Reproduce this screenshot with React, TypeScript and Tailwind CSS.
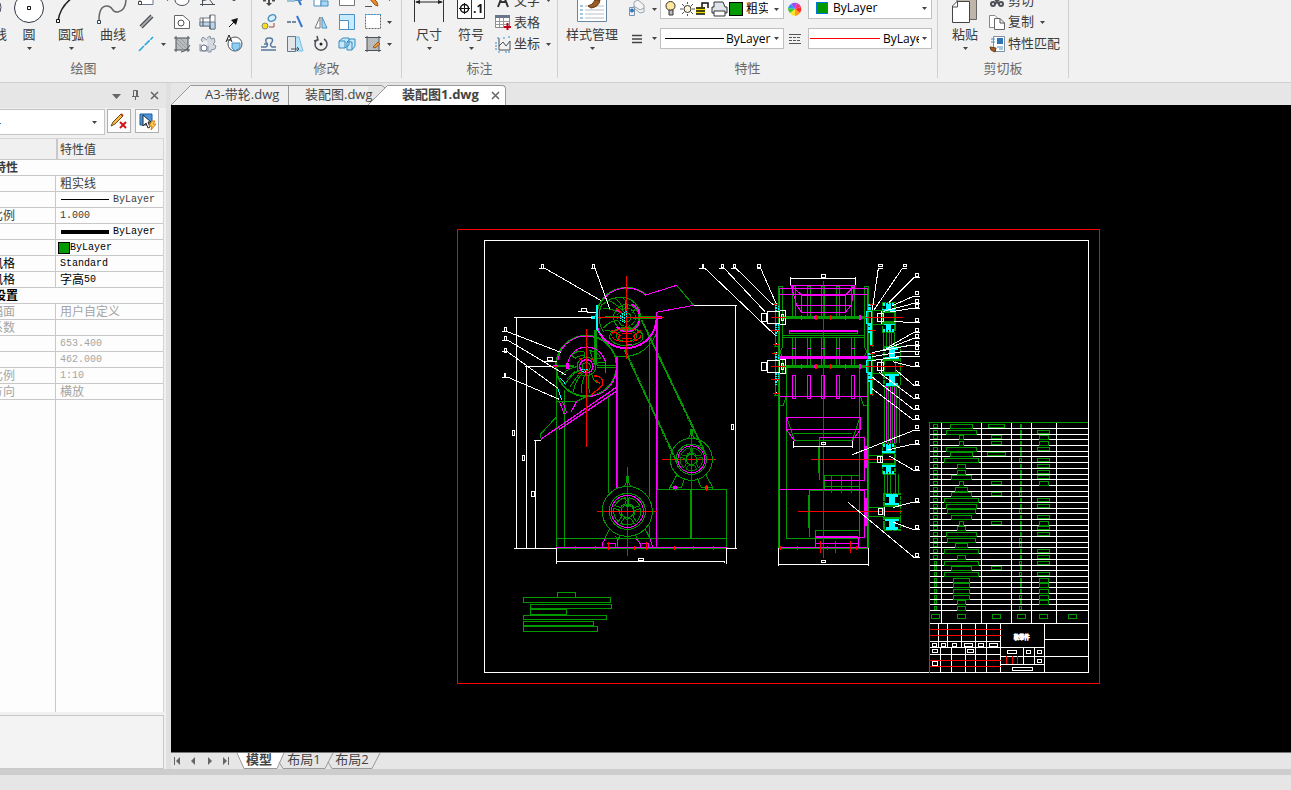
import type { ReactNode } from "react"

const GREEN = "#009900"
const MAGENTA = "#ff00ff"
const RED = "#ff0000"
const CYAN = "#00ffff"

const ink = { fill: "none", stroke: "#4b4f57", strokeWidth: 1 }
const blue = { fill: "none", stroke: "#4a90c4", strokeWidth: 1 }

function Arrow() {
  return (
    <svg width="5" height="3" viewBox="0 0 5 3" className="shrink-0">
      <path d="M0 0H5L2.500 3Z" fill="#444" />
    </svg>
  )
}

function Group({ label, className, children }: { label: string; className: string; children: ReactNode }) {
  return (
    <section className={"flex h-[78px] shrink-0 flex-col border-r border-[#d0d0d0] " + className}>
      <div className="flex h-[60px] overflow-hidden">{children}</div>
      <h2 className="text-center text-[13px] leading-[17px] text-[#6a6a6a]">{label}</h2>
    </section>
  )
}

function BigButton({ label, className, children }: { label: string; className: string; children: ReactNode }) {
  return (
    <button className={"flex shrink-0 flex-col items-center " + className}>
      {children}
      <span className="h-[22px] text-[13px] leading-[18px] whitespace-nowrap">{label}</span>
      <Arrow />
    </button>
  )
}

// small tool button; the first row is cut by the top edge of the window
function Tool({ name, top, children }: { name: string; top?: boolean; children?: ReactNode }) {
  return (
    <button aria-label={name}>
      <svg width="26" height={top ? 11 : 22} viewBox={top ? "0 11 26 11" : "0 0 26 22"}>
        {children}
      </svg>
    </button>
  )
}

function DrawTools() {
  return (
    <div className="grid grid-cols-[26px_8px_26px_26px_26px] grid-rows-[11px_22px_22px] items-center">
      <Tool name="矩形" top><path d="M5 8V15.500H18V8" fill="#fff" stroke="#68788a" /><path d="M3.500 12.500h3v3h-3z" fill="#fff" stroke="#444" /></Tool>
      <span className="mb-3 ml-1"><Arrow /></span>
      <Tool name="椭圆" top><ellipse cx="13" cy="11" rx="7" ry="5.500" {...ink} fill="#fff" /></Tool>
      <Tool name="坐标系" top><path d="M7.500 5V17M5 15.500H20M7 12L14 10 18 15" {...ink} /></Tool>
      <Tool name="箭头线" top><path d="M11 11h4l-2 1z" fill="#222" /></Tool>
      <Tool name="平行线"><path d="M5 15L16 4M7 17L18 6" {...ink} strokeWidth="1.500" /><path d="M6 16L17 5" stroke="#aaa" strokeWidth="1" /></Tool>
      <span />
      <Tool name="轮廓"><path d="M5.500 4.500H14L20.500 10V17.500H5.500Z" fill="#fff" stroke="#666" /><circle cx="12" cy="12" r="3" {...ink} /></Tool>
      <Tool name="轴孔"><path d="M5 7H15V4H20V18H15V15H5Z" fill="#fff" stroke="#777b88" /><path d="M5 11H20V18H15V15H5Z" fill="#b8d7ee" stroke="#777b88" /><path d="M8 7V15M15 4V18" {...ink} /></Tool>
      <Tool name="箭头"><path d="M8 16L13 11" stroke="#111" /><path d="M10 9L17 7L15 14Z" fill="#111" /></Tool>
      <Tool name="直线"><path d="M4 18L18 4" stroke="#23a6df" strokeWidth="1.500" strokeDasharray="7 1" /></Tool>
      <Arrow />
      <Tool name="剖面线"><path d="M7 5H19V17H7Z" fill="#b9bcbf" /><path d="M7 3V19M19 3V19M5 5H21M5 17H21" {...ink} /><path d="M8 6L18 16M12 6L18 12M8 10L14 16" stroke="#999" strokeWidth="1" /><path d="M12 19Q18 18 21 12" {...ink} /></Tool>
      <Tool name="齿轮"><path d="M12 5l3-2 1 3 3-1 1 4-2 2 3 2-1 3-4 1 0 2-3 0M12 7L8 4 6 7 8 9M5 11V18H13V13" fill="#d4d8df" stroke="#8790a2" /><circle cx="9" cy="15" r="3" fill="#fff" stroke="#68728a" /></Tool>
      <Tool name="局部放大"><circle cx="14" cy="11" r="7" fill="#fff" stroke="#4b4f57" /><path d="M11 10H19V15L14 18L11 15Z" fill="#8fd0ef" stroke="#4a90c4" /><path d="M5 9L8 2L11 9M6 7H10" fill="none" stroke="#222" /></Tool>
    </div>
  )
}

function ModifyTools() {
  return (
    <div className="ml-1 grid grid-cols-[26px_26px_26px_26px_26px_8px] grid-rows-[11px_22px_22px] items-center">
      <Tool name="移动" top><path d="M13 11V16M7 11.500H10M16 11.500H19" {...ink} strokeWidth="2" /><path d="M10 14H16L13 17Z" fill="#444" /></Tool>
      <Tool name="裁剪" top><path d="M5 12H13" {...blue} /><path d="M15 8L19 16" stroke="#2f73c9" strokeWidth="2" /><path d="M13 11.500H20" {...blue} /></Tool>
      <Tool name="阵列" top><path d="M6 9H13V17H6Z" fill="#fff" stroke="#4a90c4" /><path d="M13 12H20V17H13Z" fill="#a8daf5" stroke="#4a90c4" /></Tool>
      <Tool name="块" top><path d="M5.500 8V16.500H20.500V8" fill="#fff" stroke="#777" /></Tool>
      <Tool name="编辑" top><path d="M8 8L15 16L18 17L17 13L12 8Z" fill="#e78b2d" stroke="#965818" /><path d="M5 17.500H12" stroke="#555" /></Tool>
      <span className="mb-3 ml-px"><Arrow /></span>
      <Tool name="复制"><ellipse cx="16" cy="7" rx="4" ry="3" transform="rotate(-30 16 7)" fill="#d7f0fc" stroke="#4a90c4" strokeWidth="1.500" /><circle cx="9" cy="15" r="3" fill="#f5dd18" stroke="#888" /><path d="M13 16H18V12" fill="none" stroke="#a84432" /></Tool>
      <Tool name="延伸"><path d="M5 11H15" stroke="#4a6887" strokeWidth="1.500" strokeDasharray="4 1" /><path d="M15 5L20 16" stroke="#3478cb" strokeWidth="2" /></Tool>
      <Tool name="镜像"><path d="M12 6V17H7Z" fill="#fff" stroke="#777" /><path d="M14 6V17H19Z" fill="#a8daf5" stroke="#4a90c4" /></Tool>
      <Tool name="缩放"><path d="M5.500 3.500H20.500V18.500H5.500Z" fill="#c7eaff" stroke="#4a90c4" /><path d="M5.500 9.500H14.500V18.500H5.500Z" fill="#fff" stroke="#4a90c4" /></Tool>
      <Tool name="选择"><path d="M5.500 3.500H20.500V17.500H5.500Z" fill="#fff" stroke="#666" strokeDasharray="2 1" /><path d="M5 3.500H21" stroke="#3b9bd8" strokeDasharray="2 1" /></Tool>
      <span className="ml-px"><Arrow /></span>
      <Tool name="偏移"><path d="M5 17H20M5 14H10Q13 12 10 9Q9 5 13 5Q18 5 16 9Q13 12 16 14H20M8 11H12" fill="none" stroke="#55789c" strokeWidth="1.500" /></Tool>
      <Tool name="拉伸"><path d="M13 4H17L21 18H13Z" fill="#b7e3f9" stroke="#7bbde0" /><path d="M5.500 3.500H13.500V18.500H5.500Z" fill="#e2e6ea" stroke="#68788a" /><path d="M9 16H17M15 14l2 2-2 2" {...ink} /></Tool>
      <Tool name="旋转"><path d="M10 6A6 6 0 1 0 16 6M9 3L10 7L6 8" {...ink} strokeWidth="1.500" /><circle cx="13" cy="11" r="1.500" fill="#222" /></Tool>
      <Tool name="分解"><path d="M5 8H11V15H5ZM5 8L9 5H15V12L11 15M13 9H18V17H13ZM13 9L16 6H21V13L18 17" fill="#c5e8fa" stroke="#368bc1" /></Tool>
      <Tool name="填充编辑"><path d="M7 5H19V17H7Z" fill="#b9bcbf" /><path d="M7 3V19M19 3V19M5 4.500H21M5 17.500H21" {...ink} /><path d="M13 14L18 9L20 11L15 15Z" fill="#e79b3a" stroke="#985b1b" /></Tool>
      <span className="ml-px"><Arrow /></span>
    </div>
  )
}

function Ribbon() {
  return (
    <header className="flex h-[83px] shrink-0 overflow-hidden border-b border-[#d0d0d0] bg-[#f1f1f1] text-[#3c3c3c]">
      <Group label="绘图" className="w-[252px] [&>h2]:pr-[84px]">
        <button className="flex w-2 shrink-0 flex-col items-end overflow-hidden">
          <svg width="8" height="25" viewBox="0 0 8 25"><path d="M0 3Q2 7 0 12" {...ink} strokeWidth="1" /></svg>
          <span className="flex w-[7px] justify-end pr-px text-[13px] leading-[18px] whitespace-nowrap">直线</span>
        </button>
        <BigButton label="圆" className="w-[42px]">
          <svg width="42" height="25" viewBox="0 0 42 25"><circle cx="21" cy="8" r="14.500" fill="#fff" stroke="#2b3442" /><path d="M19.500 6.500h3v3h-3z" fill="#fff" stroke="#111" /></svg>
        </BigButton>
        <BigButton label="圆弧" className="w-[42px]">
          <svg width="42" height="25" viewBox="0 0 42 25"><path d="M8 21Q10 7 22 -2" fill="none" stroke="#222" strokeWidth="1.500" /><path d="M6.500 19.500h3v3h-3z" fill="#fff" stroke="#111" /></svg>
        </BigButton>
        <BigButton label="曲线" className="w-[42px]">
          <svg width="42" height="25" viewBox="0 0 42 25"><path d="M7 20Q7 6 15 6C22 6 19 13 26 12Q34 10 34 -1" fill="none" stroke="#666" strokeWidth="1.500" /><path d="M5.500 20.500h3v3h-3z" fill="#fff" stroke="#345" /></svg>
        </BigButton>
        <div className="pl-px"><DrawTools /></div>
      </Group>
      <Group label="修改" className="w-[150px]"><ModifyTools /></Group>
      <Group label="标注" className="w-[156px]">
        <BigButton label="尺寸" className="ml-1.5 w-[42px]">
          <svg width="42" height="25" viewBox="0 0 42 25"><path d="M6.500 0V22M35.500 0V22" stroke="#333" /><path d="M8 2H34" stroke="#222" /><path d="M7 2L12 0V4ZM35 2L30 0V4Z" fill="#222" /></svg>
        </BigButton>
        <BigButton label="符号" className="w-[42px]">
          <svg width="42" height="25" viewBox="0 0 42 25"><path d="M7.500 -2V18.500H34.500V-2M21.500 -2V18" fill="#fff" stroke="#333" /><circle cx="14.500" cy="8.500" r="4" fill="none" stroke="#111" strokeWidth="1.500" /><path d="M9 8.500H20M14.500 3V14" stroke="#111" /><text x="23" y="13" fontSize="12" fontWeight="700" fill="#111">.1</text></svg>
        </BigButton>
        <div className="grid grid-cols-[22px_auto] grid-rows-[11px_22px_22px] items-center text-[13px]">
          <svg width="22" height="11" viewBox="0 0 22 11"><path d="M6 7L11 -6L16 7M8 2H14" fill="none" stroke="#333" strokeWidth="2" /></svg>
          <button className="flex h-[11px] items-end gap-1.5 overflow-hidden leading-[22px]"><span>文字</span><span className="mb-[9px] flex"><Arrow /></span></button>
          <svg width="22" height="22" viewBox="0 0 22 22"><path d="M3.500 4.500H17.500V16.500H3.500Z" fill="#fff" stroke="#888" /><path d="M3 4H18V7H3Z" fill="#68758a" /><path d="M3 10.500H17M3 13.500H17M7.500 7V16M11.500 7V16" stroke="#999" /><path d="M12 16H19M15.500 12V19" stroke="#c00018" strokeWidth="2" /></svg>
          <button className="text-left leading-5">表格</button>
          <svg width="22" height="22" viewBox="0 0 22 22"><path d="M7 5V17H18M7 13L11 9L14 13L18 8V17" {...ink} /><path d="M5 5H8M4 9V17M11 5H14M17 3V6M6 19H9M13 19H18" stroke="#2d91d0" strokeDasharray="2 1" /></svg>
          <button className="flex items-center gap-1.5">坐标<Arrow /></button>
        </div>
      </Group>
      <Group label="特性" className="w-[380px]">
        <BigButton label="样式管理" className="w-[68px]">
          <svg width="42" height="25" viewBox="0 0 42 25"><path d="M6.500 -1V21.500H35.500V-1" fill="#fff" stroke="#68879f" /><path d="M9 6H12M9 10H12M9 14H12M9 18H12" stroke="#4a90c4" /><path d="M14 6H33M14 10H33M14 14H33M14 18H33" stroke="#b6bcc5" /><path d="M17 6Q22 5 24 0H29Q28 7 20 8Z" fill="#9a5c20" stroke="#633510" /></svg>
        </BigButton>
        <div className="grid grid-cols-[26px_8px_124px_24px_124px] grid-rows-[19px_9px_21px]">
          <button aria-label="图层">
            <svg width="26" height="19" viewBox="0 0 26 19"><path d="M8 2L12 0L18 5V12L14 13L8 8Z" fill="#f4f4f4" stroke="#9aa4ae" /><path d="M8 6L14 10L18 8" fill="none" stroke="#9aa4ae" /><path d="M3.500 7.500H8.500V15.500H3.500Z" fill="#eef" stroke="#7993a9" /><circle cx="6" cy="10.500" r="2" fill="#2e79bd" /></svg>
          </button>
          <span className="flex items-center"><Arrow /></span>
          <label className="flex items-center border border-t-0 border-[#c0c0c0] bg-white pl-1">
            <svg width="64" height="18" viewBox="0 0 64 18" className="shrink-0"><circle cx="5.500" cy="6" r="4.500" fill="#ffe89c" stroke="#333" /><path d="M4 10H8V15H4Z" fill="#bbb" stroke="#333" /><circle cx="22.500" cy="9" r="3.500" fill="#fff8d8" stroke="#333" /><path d="M22.500 2V4M22.500 14V16M15 9H18M27 9H30M17 4L19 6M28 4L26 6M17 14L19 12M28 14L26 12" stroke="#555" /><path d="M31 7H40V14H31Z" fill="#e8dc00" /><path d="M31 8H40M31 11H40M31 14H40M37 7V3H43V8" fill="none" stroke="#111" strokeWidth="1.500" /><path d="M49 7V2H58L60 7H62V13H47V7Z" fill="#dfe4ea" stroke="#333" /><path d="M49 11H60V16H49Z" fill="#fff" stroke="#333" /></svg>
            <span className="h-3.5 w-3.5 shrink-0 border border-black bg-[#009900]" />
            <select aria-label="图层" className="ml-[3px] w-[22px] shrink-0 appearance-none overflow-hidden text-[12px] text-black"><option>粗实线</option></select>
            <span className="ml-auto pr-1"><Arrow /></span>
          </label>
          <svg width="24" height="19" viewBox="0 0 24 19"><g transform="translate(11 9)"><path d="M0 0L-4 -5A6.500 6.500 0 0 1 2 -6Z" fill="#9a4cff" /><path d="M0 0L2 -6A6.500 6.500 0 0 1 6 -2Z" fill="#f3358c" /><path d="M0 0L6 -2A6.500 6.500 0 0 1 5 4Z" fill="#ff2a20" /><path d="M0 0L5 4A6.500 6.500 0 0 1 0 7Z" fill="#ff9a1c" /><path d="M0 0L0 7A6.500 6.500 0 0 1 -5 4Z" fill="#ffe321" /><path d="M0 0L-5 4A6.500 6.500 0 0 1 -7 -1Z" fill="#43c92f" /><path d="M0 0L-7 -1A6.500 6.500 0 0 1 -4 -5Z" fill="#3096ef" /></g></svg>
          <label className="flex items-center border border-t-0 border-[#c0c0c0] bg-white pb-0.5 pl-[7px]">
            <span className="h-3 w-3 shrink-0 border border-[#0078d7] bg-[#009900]" />
            <select aria-label="颜色" className="ml-[5px] w-[60px] appearance-none text-[12px] text-black"><option>ByLayer</option></select>
            <span className="ml-auto pr-1"><Arrow /></span>
          </label>
          <span className="col-span-5" />
          <button aria-label="线宽"><svg width="26" height="21" viewBox="0 0 26 21"><path d="M6 7.500H16M6 11H16M6 14.500H16" stroke="#444" strokeWidth="1.500" /></svg></button>
          <span className="flex items-center"><Arrow /></span>
          <label className="flex items-center border border-[#c0c0c0] bg-white pl-1">
            <span className="h-px w-[59px] shrink-0 bg-black" />
            <select aria-label="线型" className="ml-0.5 w-[46px] shrink-0 appearance-none text-[12px] text-black"><option>ByLayer</option></select>
            <span className="ml-auto pr-1"><Arrow /></span>
          </label>
          <svg width="24" height="21" viewBox="0 0 24 21"><path d="M5 6.500H17M5 15.500H17" stroke="#555" /><path d="M5 9.500H17M5 12.500H17" stroke="#555" strokeDasharray="3 1" /></svg>
          <label className="flex items-center border border-[#c0c0c0] bg-white pl-px">
            <span className="h-px w-[70px] shrink-0 bg-[#ff0000]" />
            <select aria-label="线宽" className="ml-[3px] w-9 shrink-0 appearance-none overflow-hidden text-[12px] text-black"><option>ByLayer</option></select>
            <span className="ml-auto pr-1"><Arrow /></span>
          </label>
        </div>
      </Group>
      <Group label="剪切板" className="w-[131px]">
        <BigButton label="粘贴" className="ml-1.5 w-[42px]">
          <svg width="42" height="25" viewBox="0 0 42 25"><path d="M13 -1H32.500V19.500H13Z" fill="#bdb5a8" stroke="#666" /><path d="M8.500 6L13 1.500H25.500V22.500H8.500Z" fill="#fff" stroke="#444" /><path d="M8.500 7H13.500V1.500" {...ink} /></svg>
        </BigButton>
        <div className="grid grid-cols-[22px_auto] grid-rows-[11px_22px_22px] items-center text-[13px]">
          <svg width="22" height="11" viewBox="0 0 22 11"><path d="M7 -3L13 4M15 -3L9 4" stroke="#555" strokeWidth="2" /><circle cx="7" cy="4" r="2" {...ink} strokeWidth="2" /><circle cx="15" cy="4" r="2" {...ink} strokeWidth="2" /></svg>
          <button className="flex h-[11px] items-end overflow-hidden leading-[22px]">剪切</button>
          <svg width="22" height="22" viewBox="0 0 22 22"><path d="M3.500 4.500H9L12.500 8V16.500H3.500Z" fill="#fff" stroke="#888" /><path d="M8.500 7.500H14L18.500 12V18.500H8.500Z" fill="#fff" stroke="#666" /><path d="M14 7.500V12H18.500" {...ink} /></svg>
          <button className="flex items-center gap-1.5">复制<Arrow /></button>
          <svg width="22" height="22" viewBox="0 0 22 22"><path d="M7.500 3.500H18.500V18.500H7.500Z" fill="#fff" stroke="#7d8fa0" /><path d="M11 5H17V11H11Z" fill="#2e75b6" /><path d="M5 6H9M5 9H9M11 14H17M13 16H17" stroke="#4a90c4" /><path d="M4 14L10 15L9 19L5 17Z" fill="#a45d26" stroke="#6d3b14" /></svg>
          <button className="text-left">特性匹配</button>
        </div>
      </Group>
    </header>
  )
}

type Prop = { name: string; value?: ReactNode; tone: string; heading?: boolean }

const props: Prop[] = [
  { name: "当前特性", tone: "text-[#3c3c3c]", heading: true },
  { name: "", value: "粗实线", tone: "text-[#3c3c3c]" },
  { name: "", value: <><i className="mr-1 ml-px h-px w-12 bg-black" /><Mono>ByLayer</Mono></>, tone: "text-[#3c3c3c]" },
  { name: "线型比例", value: <Mono>1.000</Mono>, tone: "text-[#3c3c3c]" },
  { name: "", value: <><i className="mr-1 ml-px h-1 w-12 bg-black" /><Mono>ByLayer</Mono></>, tone: "text-black" },
  { name: "", value: <><i className="-ml-0.5 h-3 w-3 border border-black bg-[#009900]" /><Mono>ByLayer</Mono></>, tone: "text-black" },
  { name: "标注风格", value: <Mono>Standard</Mono>, tone: "text-black" },
  { name: "文本风格", value: <>字高<Mono>50</Mono></>, tone: "text-black" },
  { name: "图幅设置", tone: "text-black", heading: true },
  { name: "图纸幅面", value: "用户自定义", tone: "text-[#a5a5a5]" },
  { name: "加长系数", value: "", tone: "text-[#a5a5a5]" },
  { name: "", value: <Mono>653.400</Mono>, tone: "text-[#a5a5a5]" },
  { name: "", value: <Mono>462.000</Mono>, tone: "text-[#a5a5a5]" },
  { name: "图纸比例", value: <Mono>1:10</Mono>, tone: "text-[#a5a5a5]" },
  { name: "图纸方向", value: "横放", tone: "text-[#a5a5a5]" },
]

function Mono({ children }: { children: ReactNode }) {
  return <span className="font-['Liberation_Mono',monospace] text-[10px]">{children}</span>
}

function PropertyPanel() {
  return (
    <aside className="flex w-[171px] shrink-0 flex-col border-r-[5px] border-[#e0e0e0] bg-[#f0f0f0]">
      <div className="flex h-[25px] shrink-0 items-center justify-end gap-[7px] bg-[#e6e6e6] pr-[5px] text-[#666]">
        <button aria-label="菜单"><svg width="12" height="12" viewBox="0 0 12 12"><path d="M1 4H10L5.500 9Z" fill="currentColor" /></svg></button>
        <button aria-label="固定"><svg width="12" height="12" viewBox="0 0 12 12"><path d="M2 6.500H9M3.500 6V.5H7.500V6M6.500 1V6M5.500 7V10" fill="none" stroke="currentColor" /></svg></button>
        <button aria-label="关闭"><svg width="12" height="12" viewBox="0 0 12 12"><path d="M2 2L9 9M9 2L2 9" stroke="currentColor" strokeWidth="1.500" /></svg></button>
      </div>
      <div className="flex h-[30px] shrink-0 items-start gap-[2px] pt-px">
        <label className="flex h-[26px] w-[105px] items-center border border-l-0 border-[#c4c4c4] bg-white">
          <span className="mt-0.5 h-px w-px bg-[#3377bb]" />
          <select aria-label="选择对象" className="w-[91px] appearance-none text-[12px]"><option></option></select>
          <Arrow />
        </label>
        <button aria-label="取消选择" className="flex h-6 w-6 items-center justify-center border border-[#b0b0b0] bg-[#fdfdfd]">
          <svg width="18" height="18" viewBox="0 0 18 18"><path d="M1 14L3 10L11 2L13 4L5 12Z" fill="#f7b940" stroke="#684b20" /><path d="M11 2L13 4" stroke="#b43d32" strokeWidth="2" /><path d="M10 10L16 16M16 10L10 16" stroke="#d2141a" strokeWidth="2" /></svg>
        </button>
        <button aria-label="快速选择" className="ml-0.5 flex h-6 w-6 items-center justify-center border border-[#b0b0b0] bg-[#fdfdfd]">
          <svg width="18" height="18" viewBox="0 0 18 18"><path d="M2 2H14V13H2Z" fill="#4c97dc" stroke="#1c5c9c" /><path d="M5 3V14L8 11L10 16L12 15L10 10H13Z" fill="#fff" stroke="#222" /><path d="M14 9L11 14H14L13 18L18 12H15L17 9Z" fill="#ffd34e" stroke="#db7b12" /></svg>
        </button>
      </div>
      <div className="mr-0.5 flex grow flex-col border-t border-r border-[#d5d5d5] bg-[#fdfdfd]">
        <table className="w-full table-fixed border-separate border-spacing-0 text-[12px]">
          <thead>
            <tr className="h-[21px] bg-[#f0f0f0] text-[#3c3c3c]">
              <th className="w-14 border-b border-[#c8c8c8] p-0" aria-label="特性名" />
              <th className="border-b border-l-2 border-[#c8c8c8] p-0 pt-0.5 pl-0.5 text-left leading-[18px] font-normal">特性值</th>
            </tr>
          </thead>
          <tbody>
            {props.map((p, i) => (
              <tr key={i} className={"h-4 leading-[15px] " + p.tone}>
                {p.heading ? (
                  <th colSpan={2} className="border-b border-[#c8c8c8] p-0">
                    <div className="flex w-[18px] justify-end overflow-hidden font-bold whitespace-nowrap">{p.name}</div>
                  </th>
                ) : (
                  <>
                    <td className="border-r border-b border-[#c8c8c8] p-0">
                      <div className="flex w-[15px] justify-end overflow-hidden whitespace-nowrap">{p.name}</div>
                    </td>
                    <td className="border-b border-[#c8c8c8] p-0 pl-1"><div className="flex h-[15px] items-center">{p.value}</div></td>
                  </>
                )}
              </tr>
            ))}
          </tbody>
        </table>
        <div className="w-14 grow border-r border-[#c8c8c8]" />
      </div>
      <div className="mt-[3px] mr-0.5 h-[54px] shrink-0 border border-l-0 border-[#c8c8c8] bg-[#f3f3f3]" />
    </aside>
  )
}

function FileTabs() {
  return (
    <nav className="flex h-[22px] shrink-0 items-end bg-[#e6e6e6] text-[13px] text-[#444]">
      <button className="flex h-5 w-[118px]">
        <svg width="20" height="20" viewBox="0 0 20 20" className="shrink-0"><path d="M0 20L19.500 .5H20V20Z" fill="#f0f0f0" /><path d="M0 20L19.500 .5H20" fill="none" stroke="#999" /></svg>
        <span className="h-full grow border-t border-r border-[#999] bg-[#f0f0f0] pl-3.5 text-left leading-4 whitespace-nowrap">A3-带轮.dwg</span>
      </button>
      <button className="flex h-5 w-[79px] items-start border-t border-[#999] bg-[#f0f0f0] pl-4 leading-4 whitespace-nowrap">装配图.dwg</button>
      <div className="flex h-5">
        <svg width="20" height="20" viewBox="0 0 20 20" className="shrink-0"><path d="M0 .5H14L17 3" fill="none" stroke="#999" /><path d="M0 20L19.500 .5H20V20Z" fill="#fff" /><path d="M0 20L19.500 .5H20" fill="none" stroke="#999" /></svg>
        <div className="flex h-full w-[118px] items-start rounded-tr-sm border-t border-r border-[#999] bg-white pl-3.5">
          <button className="leading-4 font-bold whitespace-nowrap">装配图1.dwg</button>
          <button aria-label="关闭" className="mt-[5px] mr-[5px] ml-auto"><svg width="9" height="9" viewBox="0 0 9 9"><path d="M1 1L8 8M8 1L1 8" stroke="#666" strokeWidth="1.500" /></svg></button>
        </div>
      </div>
    </nav>
  )
}

function LayoutTabs() {
  return (
    <nav className="flex h-[17px] shrink-0 border-t border-[#777] bg-[#e6e6e6] text-[13px] leading-[13px] text-[#444]">
      <div className="flex w-[65px] items-center justify-between pr-1.5 pl-0.5">
        <button aria-label="第一页"><svg width="8" height="8" viewBox="0 0 8 8"><path d="M1.500 0V8" stroke="#666" /><path d="M7 0V8L3 4Z" fill="#666" /></svg></button>
        <button aria-label="上一页"><svg width="8" height="8" viewBox="0 0 8 8"><path d="M6 0V8L2 4Z" fill="#666" /></svg></button>
        <button aria-label="下一页"><svg width="8" height="8" viewBox="0 0 8 8"><path d="M2 0V8L6 4Z" fill="#666" /></svg></button>
        <button aria-label="最后一页"><svg width="8" height="8" viewBox="0 0 8 8"><path d="M6.500 0V8" stroke="#666" /><path d="M1 0V8L5 4Z" fill="#666" /></svg></button>
      </div>
      <svg width="9" height="16" viewBox="0 0 9 16"><path d="M1 0L8 15.500H9V0Z" fill="#fff" /><path d="M1 0L8 15.500H9" fill="none" stroke="#999" /></svg>
      <button className="flex w-7 justify-center border-b border-[#999] bg-white font-bold whitespace-nowrap">模型</button>
      <svg width="14" height="16" viewBox="0 0 14 16"><path d="M0 0H11L4 15.500H0Z" fill="#fff" /><path d="M11 0L4 15.500H0M6 9L10 15.500H14" fill="none" stroke="#999" /></svg>
      <button className="flex w-[34px] justify-center border-b border-[#999] whitespace-nowrap">布局1</button>
      <svg width="14" height="16" viewBox="0 0 14 16"><path d="M12 0L4 15.500H0M7 9L11 15.500H14" fill="none" stroke="#999" /></svg>
      <button className="flex w-[34px] justify-center border-b border-[#999] whitespace-nowrap">布局2</button>
      <svg width="12" height="16" viewBox="0 0 12 16"><path d="M11 0L3 15.500H0" fill="none" stroke="#999" /></svg>
    </nav>
  )
}

// [x, y, w, h]
type Box = [number, number, number, number]

function Boxes({ list, stroke }: { list: Box[]; stroke: string }) {
  return <>{list.map(([x, y, w, h], i) => <rect key={i} x={x} y={y} width={w} height={h} stroke={stroke} />)}</>
}

function Motor({ x, y, s }: { x: number; y: number; s: number }) {
  return (
    <g transform={`translate(${x} ${y})`}>
      <g stroke={GREEN}>
        <circle r={75 * s} />
        <circle r={54 * s} />
        <circle r={19 * s} />
        {[36, 108, 180, 252, 324].map((a) => (
          <path key={a} transform={`rotate(${a}) scale(${s})`} d="M-9 -21Q-18 -29 -20 -36Q0 -46 20 -36Q18 -29 9 -21Q0 -26 -9 -21Z" />
        ))}
        <path d={`M0 ${-110 * s}V${-78 * s}M-9 ${-76 * s}L-3 ${-88 * s}V${-105 * s}H3V${-88 * s}L9 ${-76 * s}`} />
        <path d={`M0 ${-22 * s}V${-14 * s}`} strokeWidth="7" />
      </g>
      <circle r={48 * s} stroke={MAGENTA} />
    </g>
  )
}

function SideView() {
  return (
    <svg x="490" y="250" width="260" height="390" viewBox="0 0 780 1170" fill="none" strokeWidth="3">
      <g stroke={GREEN}>
        <path d="M199 340V895M223 420V892M199 865H710M355 435V730M477 270V740M477 828V865M503 205V718H710V895M382 320V718" />
        <path d="M603 718V865" strokeWidth="5" />
        <path d="M152 565V552L200 500M200 454H260L289 440M560 106L611 166M320 345H380M320 352H380" />
        <path d="M318 202A92 92 0 0 1 467 133" strokeWidth="5" />
        <path d="M379 320H405Q470 315 500 250M340 245A82 82 0 0 1 335 165Q370 135 410 143Q450 160 452 202M345 240Q375 250 400 230" />
        <circle cx="409" cy="202" r="38" />
        <circle cx="409" cy="202" r="27" strokeDasharray="7 3" />
        <circle cx="409" cy="202" r="14" />
        <path d="M405 190Q385 165 355 150M395 190Q365 175 340 175M388 200Q360 195 330 205M385 210Q360 212 340 235M400 180Q395 160 375 145M412 175Q412 160 400 143M425 190Q440 175 435 165M430 205H448" />
        <ellipse cx="409" cy="260" rx="50" ry="27" />
        <ellipse cx="409" cy="258" rx="31" ry="16" />
        <circle cx="289" cy="348" r="91" strokeWidth="5" />
        <circle cx="289" cy="350" r="28" />
        <circle cx="289" cy="350" r="12" />
        <path d="M280 368Q255 390 250 425M288 370Q272 395 275 430M270 360Q240 375 225 405M300 365Q290 395 300 430M305 370Q310 395 325 400M265 350Q240 350 215 375M245 318Q255 300 282 306V318Q262 316 258 325ZM300 302Q325 305 332 325L308 328ZM306 340L345 338M232 385L255 365M240 410L265 375" />
        <path d="M199 348H252M450 202H515" strokeWidth="8" />
        <path d="M317 240V345" strokeWidth="8" />
        <path d="M400 290L562 640M455 210L648 615" strokeWidth="6" strokeDasharray="9 1" />
        <path d="M358 838L345 865M376 858L384 870L390 855M436 855L446 875M466 838L480 865M560 676L540 712H575L584 685M648 676L668 712H633L622 685M538 712V718M668 712V718" />
      </g>
      <g stroke={MAGENTA}>
        <path d="M379 320V718M500 187V895" strokeWidth="4" />
        <path d="M199 892H710" />
        <path d="M340 148A88 88 0 0 1 467 135L560 106M611 166L498 187" />
        <path d="M322 235A92 92 0 0 0 500 205" strokeWidth="6" />
        <path d="M425 162A46 46 0 0 1 425 243Q395 250 380 230" strokeWidth="5" />
        <path d="M204 330A84 84 0 0 1 312 262M232 352A58 60 0 1 1 345 370M380 348Q378 425 300 440" />
        <circle cx="289" cy="349" r="20" strokeWidth="4" />
        <path d="M152 568L379 412M208 538L379 424" strokeWidth="4" />
        <path d="M209 455L222 492L230 488L218 455M243 487L260 454M345 868L337 880V892H382V868M440 868L450 880V892H488L480 868M352 881H376V892M457 881H475V892M378 180L398 190M406 160V185M408 284H425" />
        <path d="M190 348H200M232 340V356M503 202H515M550 713H560M644 713H654" strokeWidth="8" />
      </g>
      <path stroke={GREEN} d="M199 895H710" />
      <g stroke={RED}>
        <path d="M409 78V327M320 202H522M289 237V592M412 651V918M321 784H503M604 540V718M516 628H678M178 348H200M556 705V722M649 705V722" />
        <path d="M355 876V900M469 876V900M256 888V900M316 888V900M433 888V900M553 888V900M610 888V900M670 888V900" />
        <ellipse cx="409" cy="256" rx="44" ry="20" strokeDasharray="14 3" />
        <path d="M365 240L390 256L380 272M452 240L430 258L440 272M395 250H425M395 265H425M268 325L276 332M305 325L312 332M266 372L274 366M312 378Q340 375 338 405L305 435M315 390L330 400" strokeWidth="4" />
        <path d="M380 175L395 190" strokeWidth="4" />
      </g>
      <Motor x={412} y={784} s={1} />
      <Motor x={604} y={628} s={0.84} />
      <g stroke={CYAN}>
        <path d="M320 165V240" strokeWidth="6" />
        <path d="M304 202H316" strokeWidth="10" />
        <path d="M390 195V212M396 190V215M402 185V218M408 182V200M273 358H298M276 364H292" strokeDasharray="5 3" />
        <path d="M202 410L215 450M322 240L335 255M212 385L225 400" />
      </g>
      <g stroke="#fff">
        <path d="M148 55H165L333 152M302 55H315L360 178M265 185H290L298 188H318M37 245H52L212 307M37 270H52L228 375M37 305H52L200 412M37 381H52L208 448M156 335H200" />
        <path d="M73 203H305M79 203V895M105 348H190M109 348V895M133 571H152M136 571V895M73 895H200M611 166H740M736 166V895M710 895H741M199 895V942M709 895V942M199 934H704V940" />
        <Boxes stroke="#fff" list={[[154, 43, 6, 11], [307, 43, 7, 11], [274, 176, 14, 9], [43, 233, 7, 11], [43, 259, 7, 11], [43, 295, 7, 11], [43, 370, 3, 11], [172, 323, 14, 8], [67, 541, 7, 15], [97, 616, 7, 15], [124, 724, 9, 15], [724, 523, 7, 15], [445, 925, 16, 7]]} />
      </g>
      <Boxes stroke={GREEN} list={[[202, 1027, 55, 14], [100, 1042, 262, 15], [121, 1063, 244, 12], [121, 1078, 109, 15], [100, 1096, 250, 12], [100, 1114, 210, 12], [100, 1129, 223, 15]]} />
    </svg>
  )
}

const slots = [307, 352, 394, 439, 484]
const tags = [75, 129, 153, 168, 210, 240, 258, 280, 295, 309, 342, 398, 437, 470, 500, 532, 576, 654, 750, 831, 915]

// shaft end with its bearing housing, drawn at the two roller heights
function Bearing({ y }: { y: number }) {
  return (
    <g transform={`translate(0 ${y})`}>
      <g stroke={GREEN}>
        <path d="M256 -42V88M266 -42V88M252 -42H268M252 40H268M252 88H268M276 -22V22M530 -22H582M530 22H582" />
        <path d="M548 -42V88" />
        <path d="M575 -18H615V18H575" />
        <path d="M282 0H528" strokeWidth="9" />
      </g>
      <g stroke={CYAN}>
        <path d="M258 -38V-20M258 20V60" strokeWidth="6" strokeDasharray="5 3" />
        <path d="M264 -35V-20M264 20V38" strokeDasharray="5 3" />
        <path d="M529 -18V18M545 -18V18M529 -18H545M529 18H545" />
        <path d="M538 -40V-18M538 20V50" strokeWidth="7" strokeDasharray="7 3" />
        <path d="M544 20V86" strokeWidth="6" />
      </g>
      <g stroke="#fff">
        <path d="M232 -18H268V18H232ZM215 -12H228V12H215ZM270 -20H287V20H270M275 -9H280V10H275ZM562 -12H579V12H562ZM575 -20V20M258 -42V-38M262 38V44M258 78V84" />
        <path d="M595 0H618" strokeWidth="4" />
      </g>
      <path stroke={RED} d="M244 0H288M528 0H640M246 -40H262M244 38H270M250 80H268M540 -40H555M540 38H558M540 84H552" />
      <path stroke={MAGENTA} strokeWidth="5" d="M334 -7V7M466 -7V7M375 -5V5M510 -7V7" />
      <path stroke={RED} strokeWidth="4" d="M378 -7V7M422 -7V7" />
    </g>
  )
}

function Pulley({ x, y, w, h }: { x: number; y: number; w: number; h: number }) {
  const m = x + w / 2
  const e = h / 3
  return (
    <g>
      <rect x={x} y={y} width={w} height={h} stroke={GREEN} strokeWidth="5" strokeDasharray="12 2" />
      <path d={`M${x} ${y + e}H${x + w}M${x} ${y + h - e}H${x + w}`} stroke={GREEN} strokeWidth="5" />
      <g stroke={CYAN}>
        <path d={`M${m - 17} ${y + 5}H${m + 18}M${m - 17} ${y + h - 5}H${m + 18}`} strokeWidth="9" strokeDasharray="7 2" />
        <path d={`M${m} ${y + 5}V${y + e - 3}M${m} ${y + h - e + 3}V${y + h - 5}`} strokeWidth="16" />
        <path d={`M${m - 20} ${y + e - 6}H${m + 20}M${m - 20} ${y + h - e + 6}H${m + 20}`} strokeWidth="6" />
      </g>
    </g>
  )
}

function FrontView() {
  return (
    <svg x="690" y="250" width="240" height="330" viewBox="0 0 720 990" fill="none" strokeWidth="3">
      <g stroke={GREEN}>
        <path d="M265 108V895H535V108M278 108V290M523 108V290M289 350V865H508V350M265 109H278M523 109H535M278 256H523M278 262H523M298 250H503V240" />
        <path d="M278 290L270 305L280 325M523 290L530 305L520 325M268 445V465H280L288 440M533 445V465H520L512 440" />
        {slots.map((x) => (
          <path key={x} d={`M${x} 109H${x + 10}V200M${x} 109V200M${x} 262V345M${x + 10} 262V345`} />
        ))}
        <path d="M290 502L313 570H487L510 502M313 550H487M386 590V668M403 676H508M403 676V720M403 709H508M376 841H508M376 841V862M356 735V834M388 562V690" />
        <path d="M358 862V720H508V865" />
        <path d="M580 245V290M588 245V290M597 245V290M605 245V290M612 245V290M583 408V580M596 408V580M608 408V580M618 408V580M627 408V580M583 672V732M592 672V732M601 672V732M615 672V732M625 672V732M528 616H580M528 637H580M528 772H580M528 799H580" />
        <path d="M528 202H620" />
      </g>
      <g stroke={MAGENTA}>
        <path d="M268 115H532V892H268ZM268 133H532M301 107H496M303 107L320 165L335 187H466L484 165L494 107M303 107L335 135H466L494 107M335 135V187M466 135V187M320 166H482" />
        <path d="M298 243H503" strokeWidth="5" />
        <path d="M298 243V252M503 243V252" />
        <path d="M268 322H532" strokeWidth="8" />
        <path d="M268 439H532M289 502H512V538H289ZM290 540L313 572M510 540L487 572M388 562H524V691H403M265 718H535M508 721H524V862H376M376 862V892H505V862" />
        <path d="M376 861H505M527 588V655M527 745V828" strokeWidth="5" />
        <path d="M376 880H505M588 408V580M602 408V580M613 408V580" />
        {slots.map((x) => (
          <path key={x} d={`M${x} 376H${x + 10}V445H${x}ZM${x} 295H${x + 10}`} />
        ))}
      </g>
      <path stroke={GREEN} strokeWidth="4" d="M265 108V895H535V108" />
      <Pulley x={577} y={157} w={37} h={88} />
      <Pulley x={581} y={290} w={50} h={118} />
      <Pulley x={577} y={580} w={38} h={92} />
      <Pulley x={581} y={732} w={50} h={108} />
      <Bearing y={202} />
      <Bearing y={349} />
      <path stroke={RED} d="M400 93V924M363 628H612M324 784H636M424 678V728M454 678V728M484 678V728M391 873V910M436 873V910M481 873V910M270 888V900M322 888V900M412 888V900M500 888V900" />
      <g stroke="#fff">
        <path d="M301 82V105M496 82V105M301 85H496M311 572V593M487 572V593M311 589H487M265 895V948M535 895V948M265 943H535" />
        <path d="M27 55H45L258 258M87 55H103L225 185M124 55H138L250 165M200 55H212L258 160M580 55H565L547 180M652 55H637L552 180M690 82H672L597 158M690 138H672L605 168M690 160H672L580 184M690 176H660L600 186M690 217H640L634 214H612" />
        <path d="M690 247H672L597 290M690 265H672L580 300M690 286H660L545 308M690 303H650L545 320M690 318H640L545 332M690 348H660L608 335M690 405H670L618 360M690 444H670L568 368M690 478H670L545 380M690 508H668L545 415M690 541H672L487 614M690 582H670L592 600M690 660H670L598 618M690 756H672L610 772M690 838H668L608 816M690 922H672L474 757" />
        <path d="M562 618H578V637H562ZM572 618V637M565 775H578V794H565ZM583 772V799" />
        <Boxes stroke="#fff" list={[[37, 43, 3, 10], [94, 43, 7, 10], [130, 43, 7, 10], [202, 43, 9, 10], [566, 43, 11, 7], [640, 43, 10, 7], [394, 73, 13, 9], [394, 577, 12, 7], [394, 931, 12, 7]]} />
        <Boxes stroke="#fff" list={tags.map((y): Box => [675, y - 5, 11, 9])} />
      </g>
    </svg>
  )
}

// part list rows: name width, standard width, material width
const parts = [
  [65, 50, 0], [92, 0, 35], [14, 32, 26], [14, 32, 26], [92, 0, 35], [65, 53, 0], [104, 0, 35], [26, 0, 35],
  [26, 0, 35], [62, 0, 35], [14, 32, 26], [38, 0, 0], [62, 32, 0], [104, 0, 35], [92, 0, 35], [86, 0, 0],
  [62, 0, 35], [14, 32, 26], [26, 0, 35], [92, 0, 35], [86, 0, 0], [38, 0, 0], [104, 0, 35], [26, 0, 35],
  [104, 0, 35], [62, 32, 0], [104, 0, 35], [50, 0, 26], [50, 0, 26], [50, 0, 26], [50, 0, 26], [26, 0, 26], [26, 0, 0],
]
const hollow = [6, 12, 15, 20, 21, 24, 26, 30, 32]

function PartList() {
  return (
    <svg x="920" y="415" width="180" height="275" viewBox="0 0 540 825" fill="none" strokeWidth="3">
      {parts.map(([name, std, mat], i) => {
        const y = 27 + Math.round((i * 546) / 96) * 3
        return (
          <g key={i} stroke={GREEN}>
            <path d={`M28 ${y + 14}H505`} stroke="#fff" />
            <rect x={i < 24 ? 40 : 43} y={y + 1} width={i < 24 ? 12 : 6} height="9" />
            <rect x={124 - name / 2} y={y} width={name} height="14" />
            {std > 0 && <rect x={229 - std / 2} y={y} width={std} height="10" />}
            {mat > 0 && <rect x={371 - mat / 2} y={y} width={mat} height={mat < 30 ? 13 : 10} />}
            {hollow.includes(i) ? <rect x="299" y={y + 2} width="6" height="9" /> : <path d={`M303 ${y}V${y + 12}`} strokeWidth="6" />}
          </g>
        )
      })}
      <path stroke="#fff" d="M65 24V625M184 24V625M274 24V625M334 24V625M409 24V625M505 0V773M28 625H505M28 679H242M28 697H373M28 718H242M0 773H505M242 625V773M373 625V773M373 673H505M242 724H505M242 748H373M55 625V697M82 625V697M124 625V697M166 625V773M199 625V773M61 697V773M94 697V773M136 697V773M310 697V748M343 697V748" />
      <path stroke={GREEN} d="M28 773V22H505" />
      <Boxes stroke={GREEN} list={[[34, 598, 25, 13], [112, 598, 25, 13], [217, 598, 25, 13], [292, 598, 25, 13], [358, 598, 25, 13], [445, 598, 25, 13]]} />
      <path stroke={RED} d="M28 643H242M28 661H242M28 736H242M28 754H242M259 724V748M277 724V748M292 724V748" />
      <Boxes stroke="#fff" list={[[37, 685, 13, 9], [64, 685, 13, 9], [97, 685, 13, 9], [133, 685, 25, 9], [175, 685, 15, 9], [208, 685, 25, 9], [37, 703, 16, 9], [142, 703, 18, 9], [37, 739, 16, 12], [262, 706, 28, 9], [319, 706, 13, 9], [352, 706, 13, 9], [352, 733, 13, 9], [277, 757, 61, 9]]} />
      <text x="305" y="671" textAnchor="middle" fontSize="16" fontWeight="700" fill="#fff" stroke="#fff" strokeWidth="2">软带件</text>
    </svg>
  )
}

function Drawing() {
  return (
    <svg viewBox="171 105 1120 647" className="min-h-0 w-full grow bg-black" shapeRendering="crispEdges" role="img" aria-label="装配图1">
      <rect x="457.500" y="229.500" width="642" height="454" fill="none" stroke={RED} />
      <rect x="484.500" y="240.500" width="604" height="432" fill="none" stroke="#fff" />
      <SideView />
      <FrontView />
      <PartList />
    </svg>
  )
}

export default function App() {
  return (
    <div className="flex h-screen flex-col overflow-hidden bg-[#e6e6e6] font-['Open_Sans','Noto_Sans_CJK_SC',sans-serif]">
      <Ribbon />
      <div className="flex min-h-0 grow">
        <PropertyPanel />
        <main className="flex min-w-0 grow flex-col">
          <FileTabs />
          <Drawing />
          <LayoutTabs />
        </main>
      </div>
      <footer className="h-[21px] shrink-0 border-t-[6px] border-[#cdcdcd] bg-[#e6e6e6]" />
    </div>
  )
}
